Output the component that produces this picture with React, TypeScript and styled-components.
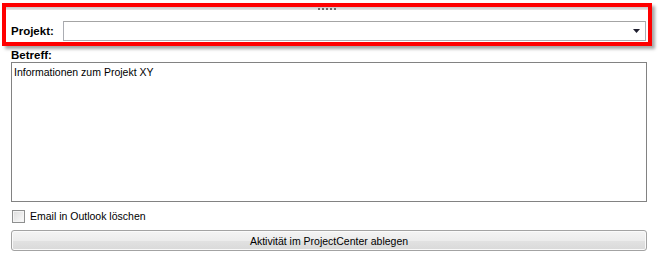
import React from 'react';
import styled, { createGlobalStyle } from 'styled-components';

const GlobalStyle = createGlobalStyle`
  html, body {
    margin: 0;
    padding: 0;
    background: #ffffff;
  }
  body {
    font-family: 'Liberation Sans', Arial, sans-serif;
    font-size: 10.5px;
    color: #000;
  }
`;

const Page = styled.div`
  width: 667px;
  height: 261px;
  padding: 3px 0 0 2px;
  box-sizing: border-box;
  display: flex;
  flex-direction: column;
`;

// red annotation frame round the project row
const Highlight = styled.div`
  width: 650px;
  height: 43px;
  box-sizing: border-box;
  border: 4px solid #ff0000;
  box-shadow: 3px 3px 3px rgba(0, 0, 0, 0.35);
  display: flex;
  flex-direction: column;
`;

const Splitter = styled.div`
  height: 3px;
  background: linear-gradient(#c8c8c8, #e8e8e8);
  display: flex;
  justify-content: center;
  align-items: center;
  gap: 2px;
`;

const GripDot = styled.span`
  width: 2px;
  height: 2px;
  background: #6a6a6a;
`;

const ProjectRow = styled.div`
  display: flex;
  align-items: center;
  padding: 11px 2px 0 5px;
  gap: 2px;
`;

const Label = styled.label`
  font-weight: bold;
  font-size: 11.5px;
  width: 50px;
  flex-shrink: 0;
`;

const Combo = styled.div`
  flex: 1;
  height: 20px;
  box-sizing: border-box;
  border: 1px solid #abadb3;
  border-top-color: #a4a4a4;
  background: #fff;
  display: flex;
  justify-content: flex-end;
  align-items: center;
  padding-right: 5px;
`;

const Body = styled.div`
  display: flex;
  flex-direction: column;
  padding: 2px 20px 0 9px;
`;

const SubjectLabel = styled.div`
  font-weight: bold;
  font-size: 11.5px;
  height: 14px;
  line-height: 14px;
`;

const TextArea = styled.div`
  height: 140px;
  box-sizing: border-box;
  border: 1px solid #828282;
  padding: 2px 2px;
  line-height: 14px;
`;

const CheckRow = styled.label`
  display: flex;
  align-items: center;
  gap: 5px;
  margin-top: 6px;
  height: 16px;
  padding-left: 1px;
`;

const CheckBox = styled.span`
  width: 13px;
  height: 13px;
  box-sizing: border-box;
  border: 1px solid #8e8f8f;
  background: linear-gradient(135deg, #dcdcdc, #fbfbfb);
  box-shadow: inset 0 0 0 1px #f4f4f4;
`;

const Button = styled.button`
  margin-top: 6px;
  height: 21px;
  box-sizing: border-box;
  border: 1px solid #a3a3a3;
  border-radius: 3px;
  background: linear-gradient(#f4f4f4 0%, #ececec 50%, #e2e2e2 51%, #d9d9d9 100%);
  box-shadow: inset 0 0 0 1px #fafafa;
  font-family: inherit;
  font-size: 10.5px;
  color: #000;
  padding: 0;
`;

const App = () => {
  return (
    <>
      <GlobalStyle />
      <Page>
        <Highlight>
          <Splitter>
            {[0, 1, 2, 3, 4].map((i) => (
              <GripDot key={i} />
            ))}
          </Splitter>
          <ProjectRow>
            <Label>Projekt:</Label>
            <Combo>
              <svg width="7" height="4" viewBox="0 0 7 4">
                <path d="M0 0h7L3.5 4z" fill="#1e1e2e" />
              </svg>
            </Combo>
          </ProjectRow>
        </Highlight>
        <Body>
          <SubjectLabel>Betreff:</SubjectLabel>
          <TextArea>Informationen zum Projekt XY</TextArea>
          <CheckRow>
            <CheckBox />
            Email in Outlook löschen
          </CheckRow>
          <Button>Aktivität im ProjectCenter ablegen</Button>
        </Body>
      </Page>
    </>
  );
};

export default App;
